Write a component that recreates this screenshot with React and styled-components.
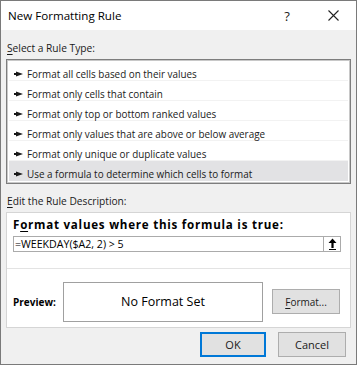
import React from "react";
import styled, { createGlobalStyle } from "styled-components";

const Global = createGlobalStyle`
  html, body { margin: 0; padding: 0; background: #ffffff; }
  body { font-family: "Open Sans", "Noto Sans", "Liberation Sans", sans-serif; }
  * { box-sizing: border-box; }
`;

const Window = styled.div`
  width: 357px;
  height: 365px;
  border: 1px solid #7a7a7a;
  background: #f0f0f0;
  display: flex;
  flex-direction: column;
  font-size: 10.2px;
  color: #000;
`;

const TitleBar = styled.div`
  height: 29px;
  background: #ffffff;
  display: flex;
  align-items: center;
  padding-left: 7px;
  flex-shrink: 0;
`;

const Title = styled.div`
  flex: 1;
  font-size: 11.6px;
  color: #000;
`;

const Help = styled.div`
  width: 46px;
  text-align: center;
  font-size: 13px;
  color: #222;
`;

const Close = styled.div`
  width: 46px;
  display: flex;
  justify-content: center;
  align-items: center;
`;

const Body = styled.div`
  flex: 1;
  padding: 0 5px 0 5px;
  display: flex;
  flex-direction: column;
`;

const SectionLabel = styled.div`
  height: 16px;
  line-height: 16px;
  margin-top: ${p => p.$top}px;
  padding-left: 1px;
  color: #1a1a1a;
  & u { text-decoration: underline; text-underline-offset: 2px; }
`;

const ListBox = styled.div`
  margin-top: 3px;
  height: 125px;
  border: 1px solid #7d7d7d;
  box-shadow: inset 0 0 0 1px #c8c8c8;
  background: #ffffff;
  padding: 1px 2px;
  display: flex;
  flex-direction: column;
`;

const Row = styled.div`
  height: 20px;
  display: flex;
  align-items: center;
  padding: 6px 0 0 5px;
  gap: 4px;
  font-size: 9.9px;
  background: ${p => (p.$selected ? "#e2e2e4" : "#ffffff")};
  border-bottom: 1px solid ${p => (p.$selected ? "#e2e2e4" : "#f2f2f2")};
  color: #1a1a1a;
  white-space: nowrap;
`;

const Panel = styled.div`
  margin-top: 3px;
  height: 116px;
  border: 1px solid #d5d5d5;
  background: #ffffff;
  display: flex;
  flex-direction: column;
`;

const PanelTop = styled.div`
  padding: 4px 9px 0 6px;
  height: 56px;
  border-bottom: 1px solid #e3e3e3;
`;

const BoldLabel = styled.div`
  font-weight: 700;
  font-size: 11.6px;
  height: 16px;
  line-height: 16px;
  letter-spacing: 0.75px;
  & u { text-decoration: underline; text-underline-offset: 2px; }
`;

const FormulaRow = styled.div`
  margin-top: 3px;
  height: 16px;
  border: 1px solid #ababab;
  display: flex;
  align-items: stretch;
`;

const FormulaText = styled.div`
  flex: 1;
  padding-left: 1px;
  line-height: 15px;
  font-size: 10.6px;
`;

const UpButton = styled.div`
  width: 17px;
  border-left: 1px solid #ababab;
  display: flex;
  justify-content: center;
  align-items: center;
`;

const PreviewRow = styled.div`
  flex: 1;
  display: flex;
  align-items: center;
  padding: 7px 9px 0 6px;
`;

const PreviewLabel = styled.div`
  font-weight: 700;
  width: 50px;
  font-size: 10px;
`;

const PreviewBox = styled.div`
  width: 200px;
  height: 40px;
  border: 1px solid #a0a0a0;
  display: flex;
  align-items: center;
  justify-content: center;
  font-size: 12.5px;
  margin-right: 9px;
`;

const Button = styled.div`
  width: ${p => p.$w}px;
  height: 25px;
  background: #e1e1e1;
  border: 1px solid ${p => (p.$primary ? "#0078d7" : "#adadad")};
  box-shadow: ${p => (p.$primary ? "inset 0 0 0 1px #0078d7" : "none")};
  display: flex;
  align-items: center;
  justify-content: center;
  color: #1a1a1a;
  font-size: ${p => p.$fs || 11}px;
  & u { text-decoration: underline; text-underline-offset: 2px; }
`;

const Footer = styled.div`
  display: flex;
  justify-content: flex-end;
  gap: 12px;
  padding: 4px 5px 0 0;
`;

const Arrow = () => (
  <svg width="9" height="6" viewBox="0 0 9 6">
    <polygon points="0,2 2,2 2,0.5 9,3 2,5.5 2,4 0,4" fill="#1a1a1a" />
  </svg>
);

const items = [
  "Format all cells based on their values",
  "Format only cells that contain",
  "Format only top or bottom ranked values",
  "Format only values that are above or below average",
  "Format only unique or duplicate values",
  "Use a formula to determine which cells to format",
];

export default function App() {
  return (
    <>
      <Global />
      <Window>
        <TitleBar>
          <Title>New Formatting Rule</Title>
          <Help>?</Help>
          <Close>
            <svg width="11" height="11" viewBox="0 0 11 11">
              <path d="M0.5 0.5 L10.5 10.5 M10.5 0.5 L0.5 10.5" stroke="#222" strokeWidth="1.1" />
            </svg>
          </Close>
        </TitleBar>
        <Body>
          <SectionLabel $top={10}>
            <u>S</u>elect a Rule Type:
          </SectionLabel>
          <ListBox>
            {items.map((t, i) => (
              <Row key={t} $selected={i === items.length - 1}>
                <Arrow />
                <span>{t}</span>
              </Row>
            ))}
          </ListBox>
          <SectionLabel $top={9}>
            <u>E</u>dit the Rule Description:
          </SectionLabel>
          <Panel>
            <PanelTop>
              <BoldLabel>
                F<u>o</u>rmat values where this formula is true:
              </BoldLabel>
              <FormulaRow>
                <FormulaText>=WEEKDAY($A2, 2) &gt; 5</FormulaText>
                <UpButton>
                  <svg width="9" height="12" viewBox="0 0 9 12">
                    <path d="M4.5 0.5 L8.5 5 L5.6 5 L5.6 10 L3.4 10 L3.4 5 L0.5 5 Z" fill="#000" />
                    <rect x="1" y="11" width="7" height="1" fill="#000" />
                  </svg>
                </UpButton>
              </FormulaRow>
            </PanelTop>
            <PreviewRow>
              <PreviewLabel>Preview:</PreviewLabel>
              <PreviewBox>No Format Set</PreviewBox>
              <Button $w={68} $fs={10}>
                <u>F</u>ormat...
              </Button>
            </PreviewRow>
          </Panel>
          <Footer>
            <Button $w={66} $primary $fs={11}>OK</Button>
            <Button $w={68} $fs={11}>Cancel</Button>
          </Footer>
        </Body>
      </Window>
    </>
  );
}
